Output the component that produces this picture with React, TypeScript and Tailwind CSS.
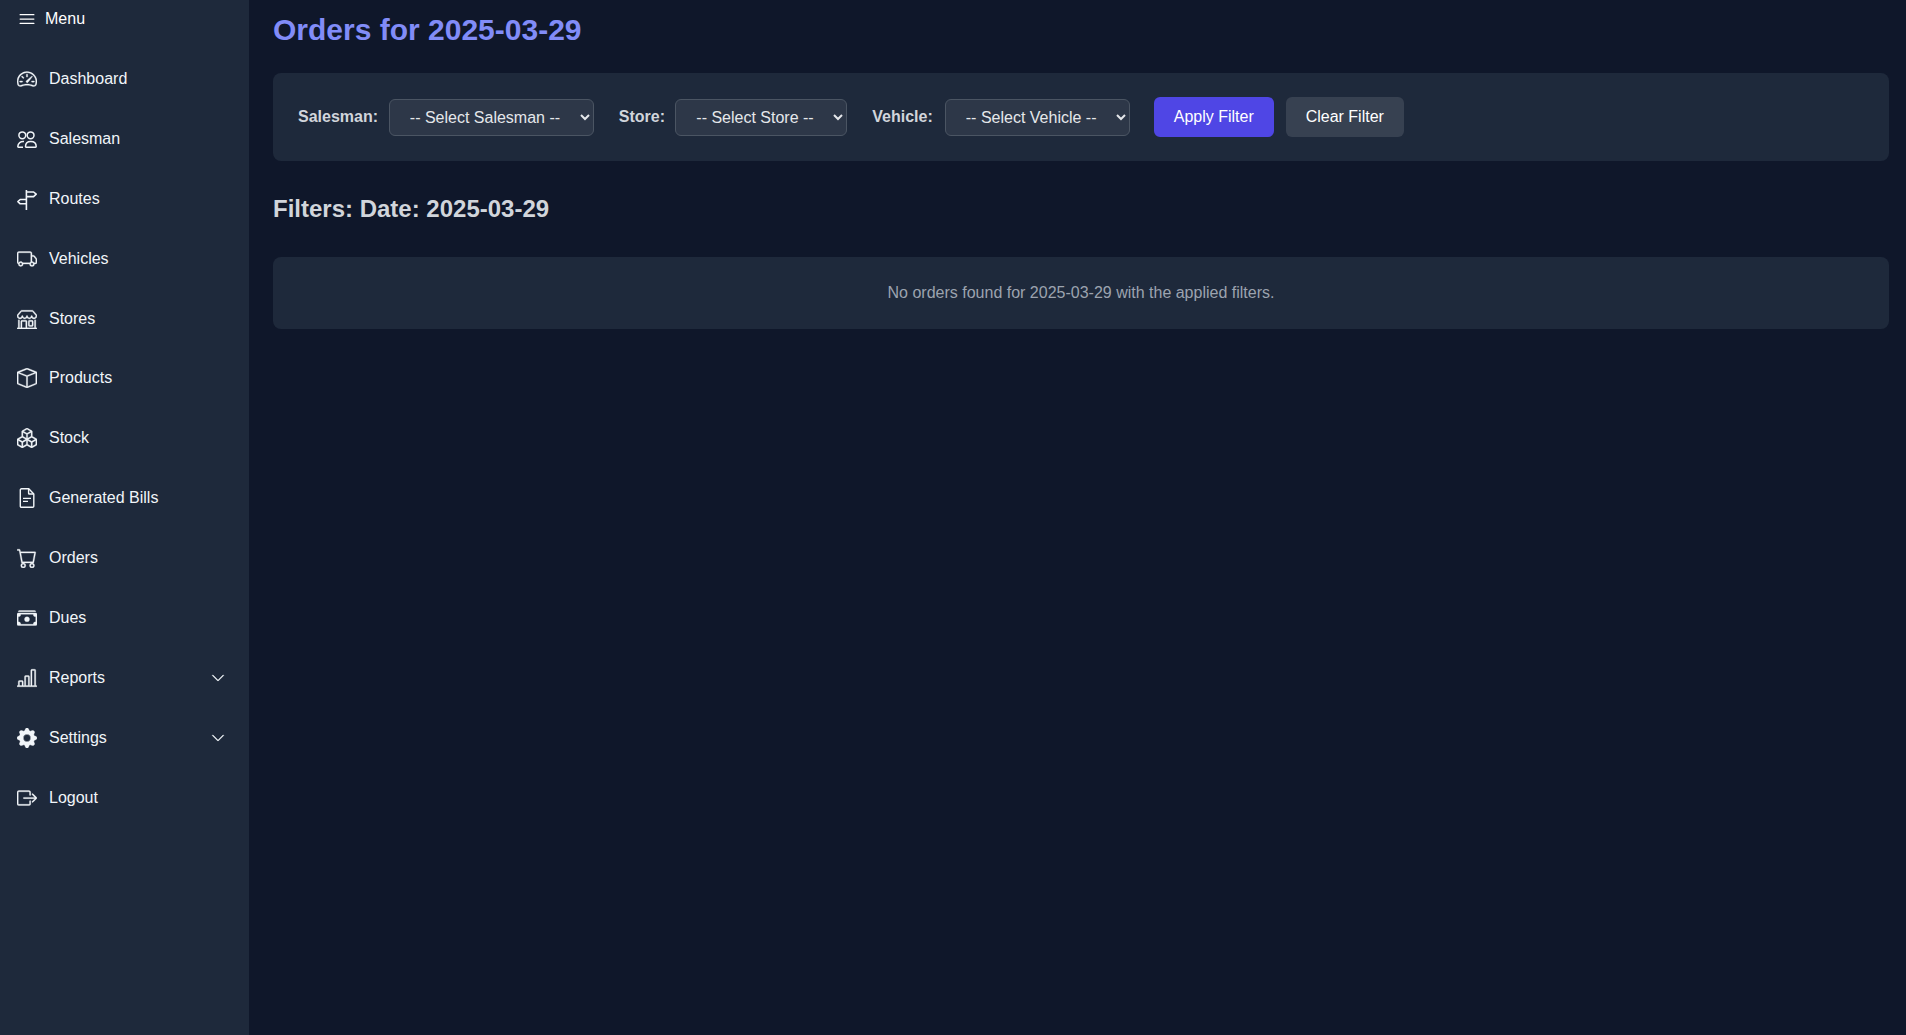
import type { ComponentType } from "react";
import {
  BsBarChartLine,
  BsBox,
  BsBoxArrowRight,
  BsBoxes,
  BsCart,
  BsCashStack,
  BsChevronDown,
  BsGearFill,
  BsShop,
  BsSpeedometer2,
  BsTruck,
} from "react-icons/bs";
import { HiOutlineBars3 } from "react-icons/hi2";

interface IconProps {
  size?: number;
  className?: string;
}

function PeopleIcon({ size = 20 }: IconProps) {
  return (
    <svg width={size} height={size} viewBox="0 0 20 20" fill="none" stroke="currentColor" strokeWidth="1.5" className="flex-shrink-0">
      <circle cx="5.3" cy="6.3" r="3.4" />
      <circle cx="13.6" cy="6.3" r="3.4" />
      <path d="M8.5 17.6c0-3.3 2.2-5.2 5.3-5.2s5.4 1.9 5.4 5.2c0 .4-.2.6-.6.6H9.1c-.4 0-.6-.2-.6-.6z" />
      <path d="M7 12.6c-3.2-.4-6.1 1.4-6.2 5 0 .4.2.6.6.6h4.6" />
    </svg>
  );
}

function SignpostIcon({ size = 20 }: IconProps) {
  return (
    <svg width={size} height={size} viewBox="0 0 20 20" fill="none" stroke="currentColor" strokeWidth="1.6" strokeLinejoin="round" className="flex-shrink-0 overflow-visible">
      <path d="M9.4 1v20" />
      <path d="M9.4 3h7.2l2.6 2.2-2.6 2.4H9.4" />
      <path d="M9.4 10.5H3.2L.9 12.6l2.3 2.2h6.2" />
    </svg>
  );
}

function DocumentIcon({ size = 20 }: IconProps) {
  return (
    <svg width={size} height={size} viewBox="0 0 20 20" fill="none" stroke="currentColor" strokeWidth="1.4" strokeLinejoin="round" className="flex-shrink-0">
      <path d="M4.4.8h7.4l5 5.2v12.2c0 .6-.5 1.1-1.1 1.1H4.4c-.6 0-1.1-.5-1.1-1.1V1.9c0-.6.5-1.1 1.1-1.1z" />
      <path d="M11.6 1v4.2c0 .5.3.8.8.8h4.2" />
      <path d="M6 10.4h8M6 13.4h5" />
    </svg>
  );
}

interface NavItem {
  label: string;
  icon: ComponentType<IconProps>;
  expandable?: boolean;
}

const navItems: NavItem[] = [
  { label: "Dashboard", icon: BsSpeedometer2 },
  { label: "Salesman", icon: PeopleIcon },
  { label: "Routes", icon: SignpostIcon },
  { label: "Vehicles", icon: BsTruck },
  { label: "Stores", icon: BsShop },
  { label: "Products", icon: BsBox },
  { label: "Stock", icon: BsBoxes },
  { label: "Generated Bills", icon: DocumentIcon },
  { label: "Orders", icon: BsCart },
  { label: "Dues", icon: BsCashStack },
  { label: "Reports", icon: BsBarChartLine, expandable: true },
  { label: "Settings", icon: BsGearFill, expandable: true },
  { label: "Logout", icon: BsBoxArrowRight },
];

const filters = [
  { label: "Salesman:", placeholder: "-- Select Salesman --", labelWidth: "w-[78.8px]" },
  { label: "Store:", placeholder: "-- Select Store --", labelWidth: "w-[44.5px]" },
  { label: "Vehicle:", placeholder: "-- Select Vehicle --", labelWidth: "" },
];

export default function App() {
  return (
    <div className="flex h-[1035px] overflow-hidden bg-[#0f172a] font-['Liberation_Sans',Arial,sans-serif] text-white">
      {/* Sidebar */}
      <aside className="w-[249px] flex-shrink-0 bg-[#1e293b]">
        <div className="flex h-[38px] items-center gap-[8px] pl-[17px] text-base">
          <HiOutlineBars3 size={20} />
          <span>Menu</span>
        </div>
        <nav className="mt-[11px]">
          {navItems.map(({ label, icon: Icon, expandable }) => (
            <a key={label} className="flex h-[59.9px] items-center pl-[17px] pr-[24px] text-base text-[#f1f5f9]">
              <Icon size={20} className="flex-shrink-0 stroke-[0.25]" />
              <span className="ml-[12px] flex-1">{label}</span>
              {expandable && <BsChevronDown size={14} className="stroke-[0.4]" />}
            </a>
          ))}
        </nav>
      </aside>

      {/* Main */}
      <main className="flex-1 pl-[24px] pr-[17px]">
        <h1 className="mt-[12px] text-3xl leading-[36px] font-bold text-[#818cf8]">Orders for 2025-03-29</h1>

        <div className="mt-[25px] flex h-[88px] items-center gap-[25px] rounded-lg bg-[#1e293b] px-[25px]">
          {filters.map((f) => (
            <div key={f.label} className="flex items-center gap-[12px]">
              <label className={`whitespace-nowrap text-base font-bold text-[#d1d5db] ${f.labelWidth}`}>{f.label}</label>
              <select className="h-[37px] rounded-md border border-[#4b5563] bg-[#2d3748] px-[16px] text-base text-[#e5e7eb]">
                <option>{f.placeholder}</option>
              </select>
            </div>
          ))}
          <div className="-ml-px flex items-center gap-[12px]">
            <button className="h-[40px] w-[120px] rounded-md bg-[#4f46e5] text-base text-white">Apply Filter</button>
            <button className="h-[40px] w-[118px] rounded-md bg-[#374151] text-base text-white">Clear Filter</button>
          </div>
        </div>

        <h2 className="mt-[32px] text-2xl leading-[32px] font-bold text-[#d1d5db]">Filters: Date: 2025-03-29</h2>

        <div className="mt-[32px] flex h-[72px] items-center justify-center rounded-lg bg-[#1e293b] text-base text-[#9ca3af]">
          No orders found for 2025-03-29 with the applied filters.
        </div>
      </main>
    </div>
  );
}
